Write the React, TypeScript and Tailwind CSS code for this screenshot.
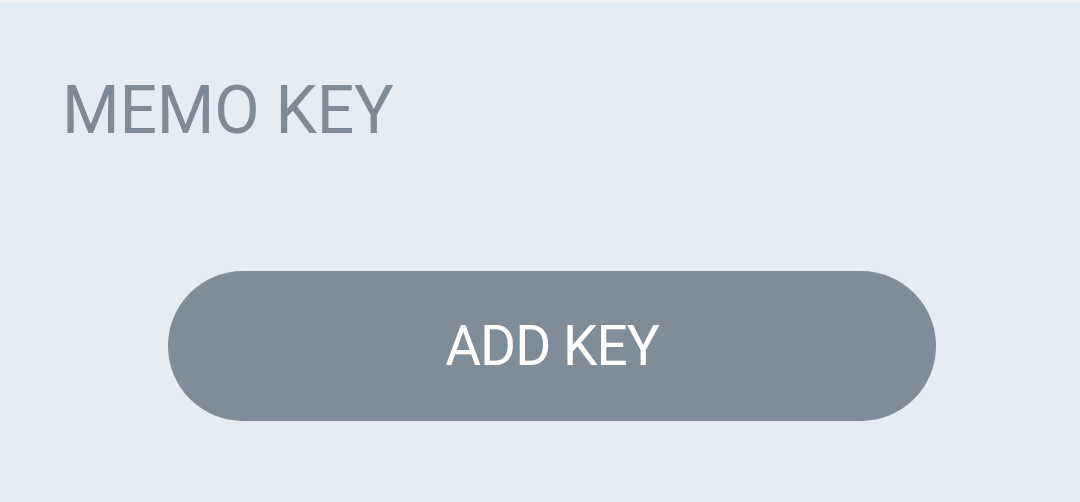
export default function App() {
  return (
    <div className="h-[502px] w-[1080px] overflow-hidden bg-[#e4ecf5] font-['Roboto',sans-serif]">
      <div className="h-[3px] bg-[#eef2f7]" />
      <div className="pl-[62px] pt-[68px]">
        <p className="text-[66px] leading-[80px] tracking-[-0.2px] text-[#7d8a97]">MEMO KEY</p>
      </div>
      <div className="mt-[120px] flex justify-center pl-[24px]">
        <button className="flex h-[150px] w-[768px] items-center justify-center rounded-full bg-[#7f8c99] text-[55px] tracking-[-1px] text-white">
          ADD KEY
        </button>
      </div>
    </div>
  );
}
